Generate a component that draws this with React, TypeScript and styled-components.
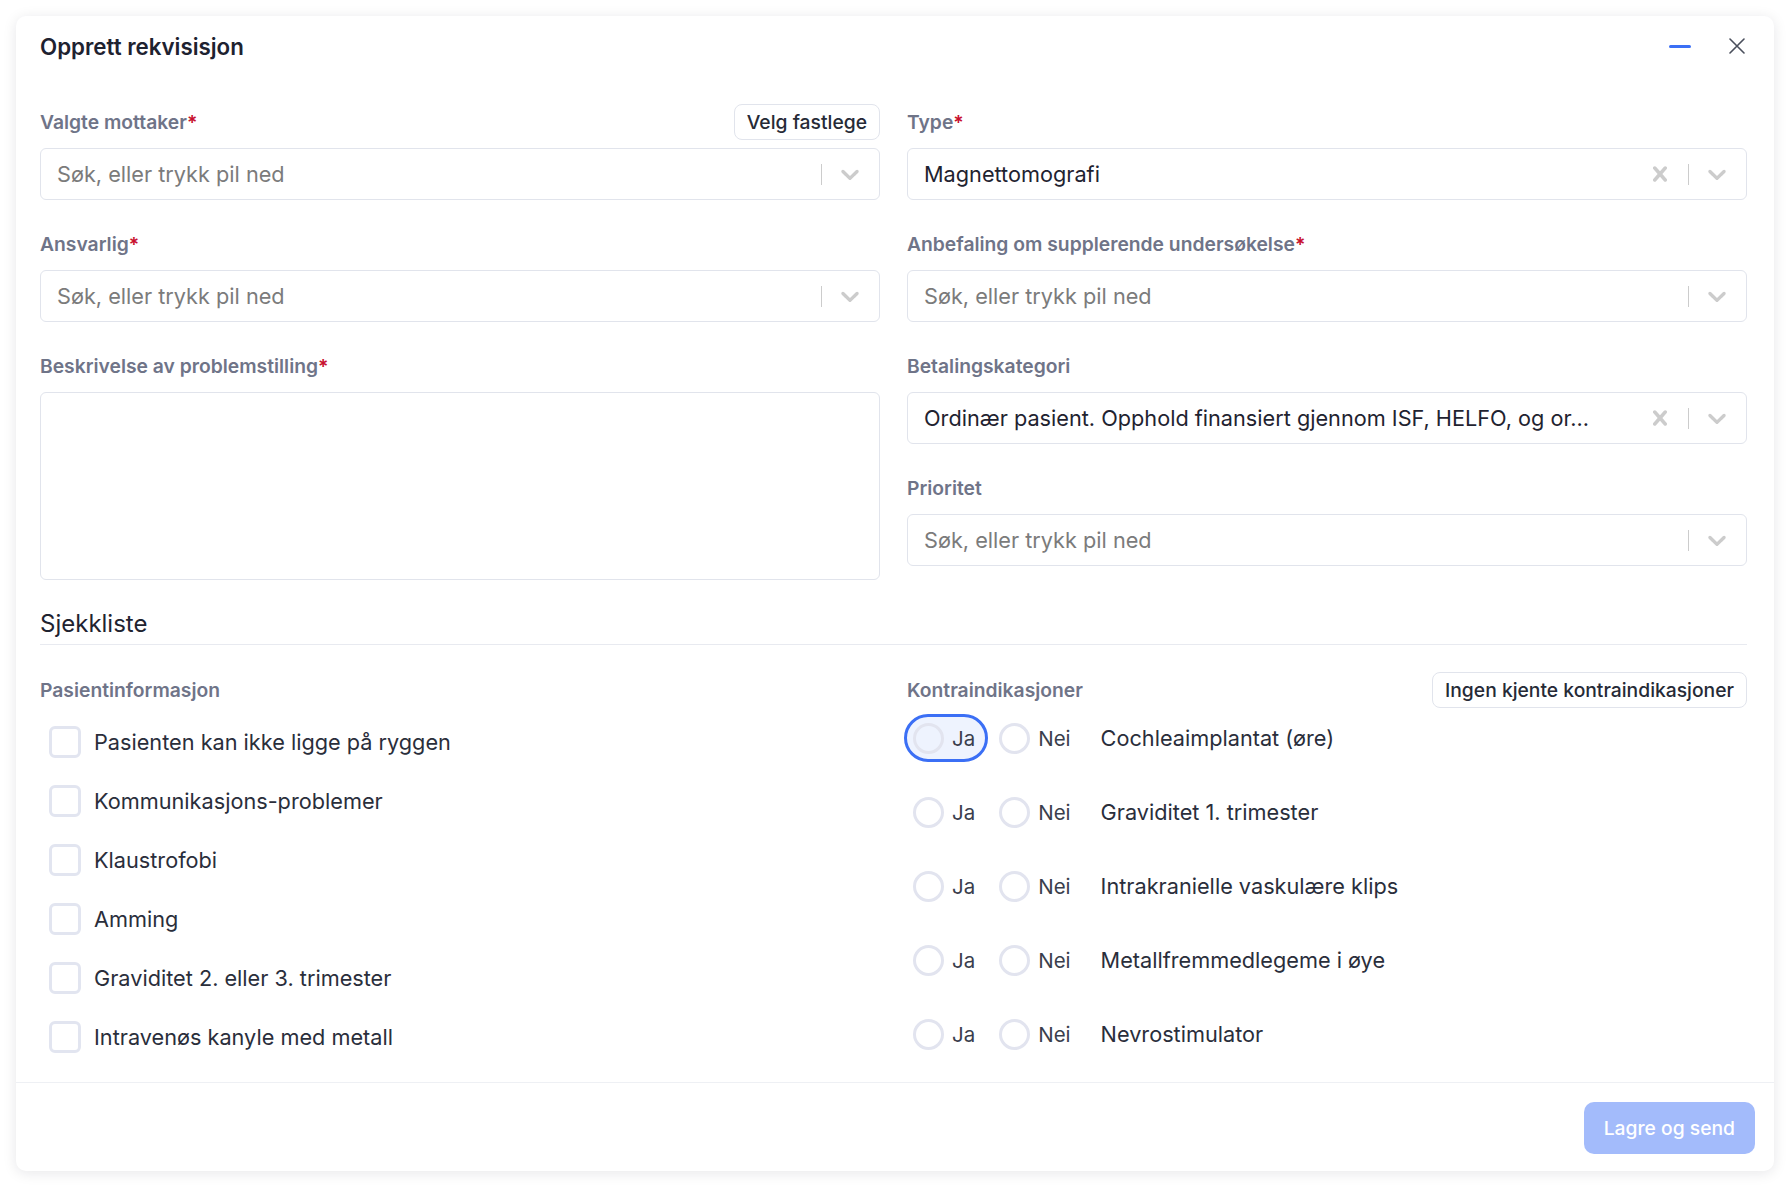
import styled, { createGlobalStyle } from "styled-components";

const GlobalStyle = createGlobalStyle`
  html, body {
    margin: 0;
    padding: 0;
    background: #ffffff;
  }
  body {
    font-family: Inter, "Noto Sans", "Liberation Sans", sans-serif;
    color: #2a2e3b;
  }
  * {
    box-sizing: border-box;
  }
`;

const Card = styled.div`
  margin: 16px;
  background: #ffffff;
  border-radius: 10px;
  box-shadow: 0 2px 14px rgba(20, 24, 40, 0.1);
  display: flex;
  flex-direction: column;
`;

const Header = styled.div`
  height: 60px;
  display: flex;
  align-items: center;
  justify-content: space-between;
  padding: 0 29px 0 24px;
`;

const Title = styled.h1`
  margin: 0;
  font-size: 22.3px;
  font-weight: 600;
  color: #1e2230;
`;

const HeaderActions = styled.div`
  display: flex;
  align-items: center;
  gap: 38px;
`;

const IconButton = styled.button`
  border: none;
  background: none;
  padding: 0;
  display: flex;
  align-items: center;
  justify-content: center;
  cursor: pointer;
`;

const MinimizeBar = styled.span`
  display: block;
  width: 22px;
  height: 3px;
  border-radius: 2px;
  background: #3b6ff5;
`;

const Body = styled.div`
  padding: 28px 27px 24px 24px;
`;

const TwoCols = styled.div`
  display: grid;
  grid-template-columns: 1fr 1fr;
  column-gap: 27px;
`;

const Column = styled.div<{ $gap?: number }>`
  display: flex;
  flex-direction: column;
  gap: ${({ $gap }) => $gap ?? 26}px;
`;

const Field = styled.div`
  display: flex;
  flex-direction: column;
  gap: 8px;
`;

const LabelRow = styled.div`
  height: 36px;
  display: flex;
  align-items: center;
  justify-content: space-between;
`;

const Label = styled.label`
  font-size: 19.3px;
  font-weight: 600;
  color: #6f7488;
`;

const Required = styled.span`
  color: #c8102e;
`;

const GhostButton = styled.button`
  height: 36px;
  padding: 0 12px;
  border: 1px solid #e1e4ec;
  border-radius: 8px;
  background: #ffffff;
  font-family: inherit;
  font-size: 19.3px;
  font-weight: 500;
  color: #262a36;
  cursor: pointer;
`;

const SelectBox = styled.div`
  height: 52px;
  border: 1px solid #e1e4ec;
  border-radius: 6px;
  display: flex;
  align-items: center;
  padding-left: 16px;
`;

const SelectValue = styled.div<{ $placeholder?: boolean }>`
  flex: 1;
  min-width: 0;
  font-size: 21.7px;
  color: ${({ $placeholder }) => ($placeholder ? "#7b7b7b" : "#1f2330")};
  white-space: nowrap;
  overflow: hidden;
  text-overflow: ellipsis;
`;

const Indicators = styled.div`
  display: flex;
  align-items: center;
  padding-right: 14px;
  gap: 13px;
`;

const Separator = styled.span`
  width: 1px;
  height: 21px;
  background: #cccccc;
`;

const TextArea = styled.textarea`
  height: 188px;
  border: 1px solid #e1e4ec;
  border-radius: 6px;
  resize: none;
  font-family: inherit;
  font-size: 21.7px;
  padding: 14px 16px;
  outline: none;
`;

const SectionTitle = styled.h2`
  margin: 29px 0 0;
  padding-bottom: 5px;
  border-bottom: 1px solid #e8eaf0;
  font-size: 24px;
  font-weight: 400;
  line-height: 30px;
  color: #1f2330;
`;

const Checklist = styled(TwoCols)`
  margin-top: 27px;
`;

const SubHeader = styled.div`
  height: 36px;
  display: flex;
  align-items: center;
  justify-content: space-between;
  font-size: 19.3px;
  font-weight: 600;
  color: #6f7488;
`;

const CheckList = styled.div`
  margin-top: 18px;
  display: flex;
  flex-direction: column;
  gap: 27px;
`;

const CheckRow = styled.label`
  height: 32px;
  display: flex;
  align-items: center;
  gap: 13px;
  padding-left: 9px;
  font-size: 21.7px;
  color: #2a2e3b;
`;

const CheckBox = styled.span`
  width: 32px;
  height: 32px;
  border: 3px solid #e2e5f0;
  border-radius: 6px;
  flex-shrink: 0;
`;

const RadioList = styled.div`
  margin-top: 6px;
  display: flex;
  flex-direction: column;
  gap: 26px;
`;

const RadioRow = styled.div`
  height: 48px;
  display: flex;
  align-items: center;
  margin-left: -3px;
`;

const RadioOption = styled.label<{ $focused?: boolean }>`
  height: 48px;
  display: flex;
  align-items: center;
  gap: 8px;
  padding: 0 10px 0 6px;
  margin-right: 2px;
  border: 3px solid ${({ $focused }) => ($focused ? "#3b6ff5" : "transparent")};
  background: ${({ $focused }) => ($focused ? "#eef3fe" : "transparent")};
  border-radius: 24px;
  font-size: 20.5px;
  color: #3a3e4c;
`;

const RadioCircle = styled.span`
  width: 31px;
  height: 31px;
  border: 3px solid #e2e4ef;
  border-radius: 50%;
  flex-shrink: 0;
`;

const RadioLabel = styled.span`
  margin-left: 15px;
  font-size: 21.7px;
  color: #2a2e3b;
`;

const Footer = styled.div`
  border-top: 1px solid #eef0f4;
  padding: 19px 19px 17px;
  display: flex;
  justify-content: flex-end;
`;

const PrimaryButton = styled.button`
  height: 52px;
  padding: 0 20px;
  border: none;
  border-radius: 10px;
  background: #a3bbfb;
  color: #ffffff;
  font-family: inherit;
  font-size: 19.3px;
  font-weight: 500;
`;

const CrossIcon = () => (
  <svg width="30" height="30" viewBox="0 0 20 20" fill="#cccccc">
    <path d="M14.348 14.849c-0.469 0.469-1.229 0.469-1.697 0l-2.651-3.030-2.651 3.029c-0.469 0.469-1.229 0.469-1.697 0-0.469-0.469-0.469-1.229 0-1.697l2.758-3.15-2.759-3.152c-0.469-0.469-0.469-1.228 0-1.697s1.228-0.469 1.697 0l2.652 3.031 2.651-3.031c0.469-0.469 1.228-0.469 1.697 0s0.469 1.229 0 1.697l-2.758 3.152 2.758 3.15c0.469 0.469 0.469 1.229 0 1.698z" />
  </svg>
);

const ChevronIcon = () => (
  <svg width="30" height="30" viewBox="0 0 20 20" fill="#cccccc">
    <path d="M4.516 7.548c0.436-0.446 1.043-0.481 1.576 0l3.908 3.747 3.908-3.747c0.533-0.481 1.141-0.446 1.574 0 0.436 0.445 0.408 1.197 0 1.615-0.406 0.418-4.695 4.502-4.695 4.502-0.217 0.223-0.502 0.335-0.787 0.335s-0.57-0.112-0.789-0.335c0 0-4.287-4.084-4.695-4.502s-0.436-1.170 0-1.615z" />
  </svg>
);

const CloseIcon = () => (
  <svg width="16" height="16" viewBox="0 0 16 16" stroke="#4a4f5c" strokeWidth="1.6" strokeLinecap="round">
    <path d="M1 1L15 15M15 1L1 15" />
  </svg>
);

const PLACEHOLDER = "Søk, eller trykk pil ned";

function Select({ value, clearable }: { value?: string; clearable?: boolean }) {
  return (
    <SelectBox>
      <SelectValue $placeholder={!value}>{value ?? PLACEHOLDER}</SelectValue>
      <Indicators>
        {clearable && <CrossIcon />}
        <Separator />
        <ChevronIcon />
      </Indicators>
    </SelectBox>
  );
}

function FieldLabel({ text, required }: { text: string; required?: boolean }) {
  return (
    <Label>
      {text}
      {required && <Required>*</Required>}
    </Label>
  );
}

const patientInfo = [
  "Pasienten kan ikke ligge på ryggen",
  "Kommunikasjons-problemer",
  "Klaustrofobi",
  "Amming",
  "Graviditet 2. eller 3. trimester",
  "Intravenøs kanyle med metall",
];

const contraindications = [
  "Cochleaimplantat (øre)",
  "Graviditet 1. trimester",
  "Intrakranielle vaskulære klips",
  "Metallfremmedlegeme i øye",
  "Nevrostimulator",
];

export default function App() {
  return (
    <>
      <GlobalStyle />
      <Card>
        <Header>
          <Title>Opprett rekvisisjon</Title>
          <HeaderActions>
            <IconButton aria-label="Minimer">
              <MinimizeBar />
            </IconButton>
            <IconButton aria-label="Lukk">
              <CloseIcon />
            </IconButton>
          </HeaderActions>
        </Header>

        <Body>
          <TwoCols>
            <Column>
              <Field>
                <LabelRow>
                  <FieldLabel text="Valgte mottaker" required />
                  <GhostButton>Velg fastlege</GhostButton>
                </LabelRow>
                <Select />
              </Field>
              <Field>
                <LabelRow>
                  <FieldLabel text="Ansvarlig" required />
                </LabelRow>
                <Select />
              </Field>
              <Field>
                <LabelRow>
                  <FieldLabel text="Beskrivelse av problemstilling" required />
                </LabelRow>
                <TextArea />
              </Field>
            </Column>

            <Column>
              <Field>
                <LabelRow>
                  <FieldLabel text="Type" required />
                </LabelRow>
                <Select value="Magnettomografi" clearable />
              </Field>
              <Field>
                <LabelRow>
                  <FieldLabel text="Anbefaling om supplerende undersøkelse" required />
                </LabelRow>
                <Select />
              </Field>
              <Field>
                <LabelRow>
                  <FieldLabel text="Betalingskategori" />
                </LabelRow>
                <Select
                  value="Ordinær pasient. Opphold finansiert gjennom ISF, HELFO, og or..."
                  clearable
                />
              </Field>
              <Field>
                <LabelRow>
                  <FieldLabel text="Prioritet" />
                </LabelRow>
                <Select />
              </Field>
            </Column>
          </TwoCols>

          <SectionTitle>Sjekkliste</SectionTitle>

          <Checklist>
            <div>
              <SubHeader>Pasientinformasjon</SubHeader>
              <CheckList>
                {patientInfo.map((item) => (
                  <CheckRow key={item}>
                    <CheckBox />
                    {item}
                  </CheckRow>
                ))}
              </CheckList>
            </div>
            <div>
              <SubHeader>
                Kontraindikasjoner
                <GhostButton>Ingen kjente kontraindikasjoner</GhostButton>
              </SubHeader>
              <RadioList>
                {contraindications.map((item, i) => (
                  <RadioRow key={item}>
                    <RadioOption $focused={i === 0}>
                      <RadioCircle />
                      Ja
                    </RadioOption>
                    <RadioOption>
                      <RadioCircle />
                      Nei
                    </RadioOption>
                    <RadioLabel>{item}</RadioLabel>
                  </RadioRow>
                ))}
              </RadioList>
            </div>
          </Checklist>
        </Body>

        <Footer>
          <PrimaryButton>Lagre og send</PrimaryButton>
        </Footer>
      </Card>
    </>
  );
}
